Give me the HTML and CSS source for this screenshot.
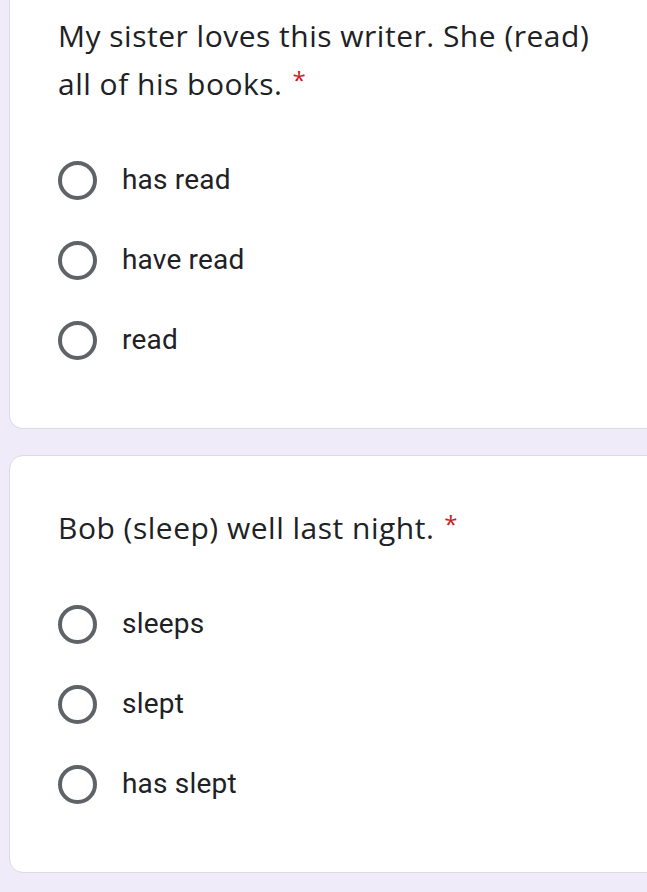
FILE: index.html
```html
<!DOCTYPE html>
<html>
<head>
<meta charset="utf-8">
<link rel="stylesheet" href="styles.css">
</head>
<body>
<div class="page">
  <div class="card card--cut">
    <div class="question">My sister loves this writer. She (read) all of his books.<span class="req">*</span></div>
    <div class="options">
      <div class="option"><span class="radio"></span><span class="label">has read</span></div>
      <div class="option"><span class="radio"></span><span class="label">have read</span></div>
      <div class="option"><span class="radio"></span><span class="label">read</span></div>
    </div>
  </div>
  <div class="card">
    <div class="question">Bob (sleep) well last night.<span class="req">*</span></div>
    <div class="options">
      <div class="option"><span class="radio"></span><span class="label">sleeps</span></div>
      <div class="option"><span class="radio"></span><span class="label">slept</span></div>
      <div class="option"><span class="radio"></span><span class="label">has slept</span></div>
    </div>
  </div>
</div>
</body>
</html>
```

FILE: styles.css
```css
html, body {
  margin: 0;
  padding: 0;
  background: #f0ebf8;
}
.page {
  padding-left: 9px;
  display: flex;
  flex-direction: column;
  gap: 26px;
  width: 660px;
}
.card {
  background: #fff;
  border: 1px solid #dadce0;
  border-radius: 14px;
  padding: 48px 0 48px 48px;
}
.card--cut {
  border-top: none;
  border-top-left-radius: 0;
  border-top-right-radius: 0;
  padding-top: 12px;
}
.question {
  font-family: "Open Sans", sans-serif;
  font-size: 30px;
  line-height: 48px;
  color: #202124;
  width: 560px;
  letter-spacing: 0.5px;
}
.req {
  display: inline-block;
  color: #c5221f;
  font-size: 24px;
  line-height: 24px;
  vertical-align: 6px;
  margin-left: 10px;
}
.options {
  margin-top: 32px;
  display: flex;
  flex-direction: column;
}
.option {
  height: 80px;
  display: flex;
  align-items: center;
  gap: 25px;
}
.radio {
  box-sizing: border-box;
  width: 39px;
  height: 39px;
  border: 4px solid #5f6368;
  border-radius: 50%;
  flex: none;
}
.label {
  font-family: Roboto, sans-serif;
  font-size: 28px;
  letter-spacing: 0.2px;
  color: #202124;
  line-height: 1;
}
```
